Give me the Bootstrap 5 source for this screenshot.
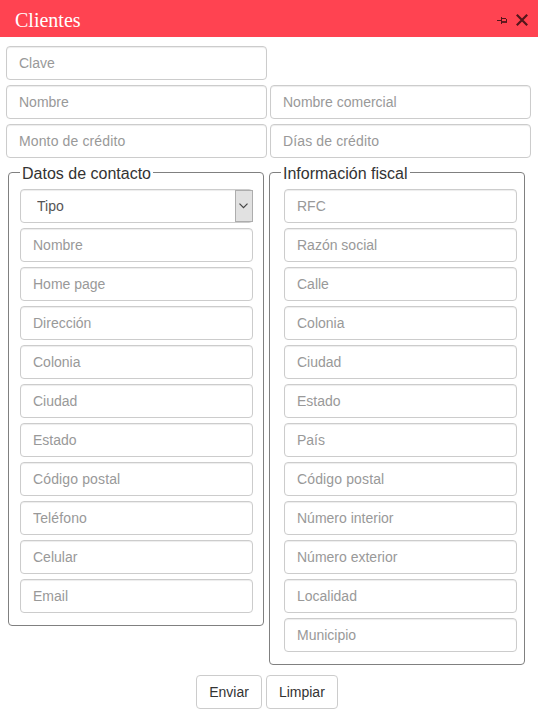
<!DOCTYPE html>
<html lang="es">
<head>
<meta charset="utf-8">
<meta name="viewport" content="width=device-width, initial-scale=1">
<title>Clientes</title>
<link href="https://cdn.jsdelivr.net/npm/bootstrap@5.3.0/dist/css/bootstrap.min.css" rel="stylesheet">
<style>
body { font-family: "Liberation Sans", Arial, sans-serif; font-size: 14px; line-height: 20px; color: #333; background: #fff; overflow: hidden; }
.titlebar { height: 37px; background: #ff4351; padding: 2px 10px 0 15px; }
.titlebar h1 { font: 20px/34px "Liberation Serif", "Times New Roman", serif; color: #fff; }
.form-control, .form-select { height: 34px; padding: 6px 12px; font-size: 14px; line-height: 20px; color: #555; border: 1px solid #ccc; border-radius: 4px; box-shadow: inset 0 1px 1px rgba(0,0,0,.075); }
.form-control::placeholder { color: #999; opacity: 1; }
.wide-text { letter-spacing: .13px; }
.stack { gap: 5px; width: 233px; }
.main-fields { display: grid; grid-template-columns: 261px 261px; gap: 5px 3px; padding: 9px 6px 0; }
.groups { padding: 6px 0 0 8px; gap: 5px; }
.group-box { width: 256px; border: 1px solid #808080; border-radius: 4px; padding: 8px 10px 12px 11px; }
.group-box legend { font-size: 16px; line-height: 15px; padding: 2px 2px 0; color: #333; }
.fiscal .stack { margin-left: 3px; }
.select-wrap .form-select { background-image: none; padding-left: 16px; }
.select-arrow { position: absolute; top: 1px; right: 0; width: 18px; height: 32px; padding-right: 2px; background: #e1e1e1; border: 1px solid #adadad; pointer-events: none; }
.actions { gap: 4px; padding: 10px 4px 0 0; }
.actions .btn { height: 34px; padding: 6px 12px; font-size: 14px; line-height: 20px; color: #333; background: #fff; border: 1px solid #ccc; border-radius: 4px; }
</style>
<script src="https://cdn.jsdelivr.net/npm/bootstrap@5.3.0/dist/js/bootstrap.bundle.min.js" defer></script>
</head>
<body>
<header class="titlebar d-flex align-items-center justify-content-between">
  <h1 class="m-0">Clientes</h1>
  <div class="d-flex align-items-center">
    <svg width="11" height="10" viewBox="0 0 11 10" fill="none" stroke="#54161b" aria-label="Fijar"><path d="M0 5.5H4M4.5 2V9M4.5 3.5H9M9.5 4V7"/><path stroke-width="1.8" d="M4.5 7H10"/></svg>
    <svg width="12" height="12" viewBox="0 0 12 12" fill="none" stroke="#54161b" stroke-width="2.2" class="ms-2" aria-label="Cerrar"><path d="M.8 .8L11.2 11.2M11.2 .8L.8 11.2"/></svg>
  </div>
</header>
<form>
  <div class="main-fields">
    <input class="form-control" placeholder="Clave"><span></span>
    <input class="form-control" placeholder="Nombre">
    <input class="form-control" placeholder="Nombre comercial">
    <input class="form-control wide-text" placeholder="Monto de crédito">
    <input class="form-control wide-text" placeholder="Días de crédito">
  </div>
  <div class="groups d-flex align-items-start">
    <fieldset class="group-box">
      <legend class="float-none w-auto mb-0">Datos de contacto</legend>
      <div class="stack d-flex flex-column">
        <div class="select-wrap position-relative">
          <select class="form-select" aria-label="Tipo"><option>Tipo</option></select>
          <span class="select-arrow d-flex align-items-center justify-content-center"><svg width="9" height="6" viewBox="0 0 9 6" fill="none" stroke="#444" stroke-width="1.2"><path d="M.5 .7L4.5 4.7L8.5 .7"/></svg></span>
        </div>
        <input class="form-control" placeholder="Nombre">
        <input class="form-control" placeholder="Home page">
        <input class="form-control" placeholder="Dirección">
        <input class="form-control" placeholder="Colonia">
        <input class="form-control" placeholder="Ciudad">
        <input class="form-control" placeholder="Estado">
        <input class="form-control wide-text" placeholder="Código postal">
        <input class="form-control wide-text" placeholder="Teléfono">
        <input class="form-control" placeholder="Celular">
        <input class="form-control" placeholder="Email">
      </div>
    </fieldset>
    <fieldset class="group-box fiscal">
      <legend class="float-none w-auto mb-0">Información fiscal</legend>
      <div class="stack d-flex flex-column">
        <input class="form-control" placeholder="RFC">
        <input class="form-control" placeholder="Razón social">
        <input class="form-control" placeholder="Calle">
        <input class="form-control" placeholder="Colonia">
        <input class="form-control" placeholder="Ciudad">
        <input class="form-control" placeholder="Estado">
        <input class="form-control" placeholder="País">
        <input class="form-control wide-text" placeholder="Código postal">
        <input class="form-control" placeholder="Número interior">
        <input class="form-control" placeholder="Número exterior">
        <input class="form-control" placeholder="Localidad">
        <input class="form-control" placeholder="Municipio">
      </div>
    </fieldset>
  </div>
  <div class="actions d-flex justify-content-center">
    <button type="button" class="btn">Enviar</button>
    <button type="reset" class="btn">Limpiar</button>
  </div>
</form>
</body>
</html>
